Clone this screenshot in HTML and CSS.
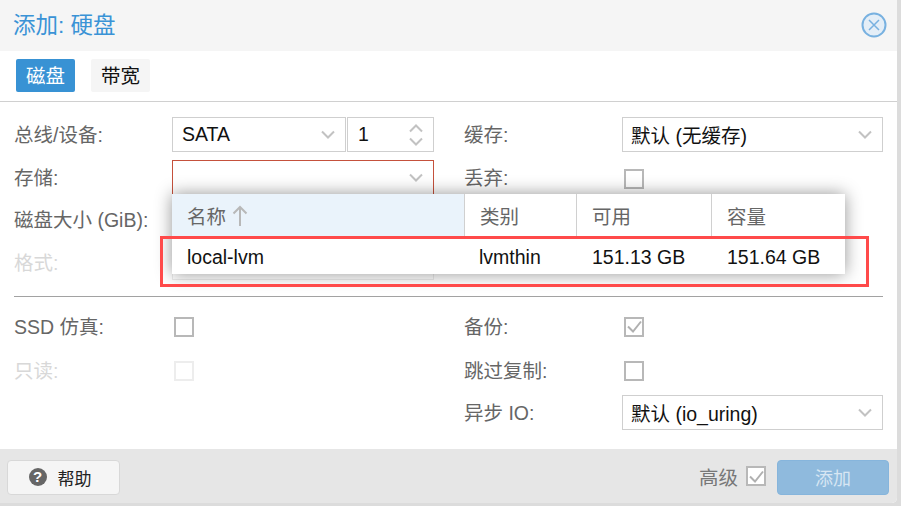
FILE: index.html
```html
<!DOCTYPE html>
<html lang="zh">
<head>
<meta charset="utf-8">
<title>添加: 硬盘</title>
<link rel="stylesheet" href="styles.css">
</head>
<body>
<div class="win">
  <header class="head">
    <span class="title">添加: 硬盘</span>
    <svg class="close" width="26" height="26" viewBox="0 0 26 26"><circle cx="13" cy="13" r="11.500" fill="#e4eef7" stroke="#78b1e0" stroke-width="2"/><path d="M8 8l10 10M18 8L8 18" stroke="#78b1e0" stroke-width="1.500" fill="none"/></svg>
  </header>
  <nav class="tabs">
    <span class="tab active">磁盘</span>
    <span class="tab">带宽</span>
  </nav>
  <main class="form">
    <div class="cols">
      <div class="col">
        <div class="row">
          <label class="lbl">总线/设备:</label>
          <div class="group">
            <div class="field bus">SATA<svg class="chev" width="14" height="9" viewBox="0 0 14 9"><path d="M1 1.500l6 6 6-6" /></svg></div>
            <div class="field spin">1<span class="arrows"><svg class="chev" width="14" height="9" viewBox="0 0 14 9"><path d="M1 7.500l6-6 6 6" /></svg><svg class="chev" width="14" height="9" viewBox="0 0 14 9"><path d="M1 1.500l6 6 6-6" /></svg></span></div>
          </div>
        </div>
        <div class="row">
          <label class="lbl">存储:</label>
          <div class="field invalid"><svg class="chev" width="14" height="9" viewBox="0 0 14 9"><path d="M1 1.500l6 6 6-6" /></svg></div>
        </div>
        <div class="row">
          <label class="lbl">磁盘大小 (GiB):</label>
          <div class="field"></div>
        </div>
        <div class="row off">
          <label class="lbl">格式:</label>
          <div class="field"></div>
        </div>
      </div>
      <div class="col">
        <div class="row">
          <label class="lbl">缓存:</label>
          <div class="field">默认 (无缓存)<svg class="chev" width="14" height="9" viewBox="0 0 14 9"><path d="M1 1.500l6 6 6-6" /></svg></div>
        </div>
        <div class="row">
          <label class="lbl">丢弃:</label>
          <span class="check low"></span>
        </div>
      </div>
    </div>
    <hr class="rule">
    <div class="cols lower">
      <div class="col">
        <div class="row">
          <label class="lbl">SSD 仿真:</label>
          <span class="check"></span>
        </div>
        <div class="row off">
          <label class="lbl">只读:</label>
          <span class="check"></span>
        </div>
      </div>
      <div class="col">
        <div class="row">
          <label class="lbl">备份:</label>
          <span class="check"><svg width="16" height="15" viewBox="0 0 16 15"><path d="M2 7.500l5 5 8-10" fill="none" stroke="#b0b0b0" stroke-width="2"/></svg></span>
        </div>
        <div class="row">
          <label class="lbl">跳过复制:</label>
          <span class="check"></span>
        </div>
        <div class="row">
          <label class="lbl">异步 IO:</label>
          <div class="field">默认 (io_uring)<svg class="chev" width="14" height="9" viewBox="0 0 14 9"><path d="M1 1.500l6 6 6-6" /></svg></div>
        </div>
      </div>
    </div>
  </main>
  <footer class="foot">
    <button class="btn help"><span class="qmark">?</span>帮助</button>
    <span class="adv">高级</span>
    <span class="check"><svg width="16" height="15" viewBox="0 0 16 15"><path d="M2 7.500l5 5 8-10" fill="none" stroke="#b0b0b0" stroke-width="2"/></svg></span>
    <button class="btn add">添加</button>
  </footer>

  <div class="picker">
    <div class="ph first">名称<svg class="sort" width="16" height="22" viewBox="0 0 16 22"><path d="M8 21V2M1.500 8.500L8 2l6.500 6.500" fill="none" stroke="#b8b8b8" stroke-width="2"/></svg></div>
    <div class="ph">类别</div>
    <div class="ph">可用</div>
    <div class="ph last">容量</div>
    <div class="pc">local-lvm</div>
    <div class="pc">lvmthin</div>
    <div class="pc num">151.13 GB</div>
    <div class="pc num">151.64 GB</div>
  </div>
  <div class="mark"></div>
</div>
</body>
</html>
```
FILE: styles.css
```css
* { box-sizing: border-box; }
html, body { margin: 0; height: 100%; overflow: hidden; }
body {
  background: #dcdcdc;
  font: 19.5px "Liberation Sans", "Noto Sans CJK SC", sans-serif;
  color: #111;
}
.win {
  position: relative;
  width: 897px;
  height: 503px;
  background: #fff;
  border-radius: 0 0 5px 0;
  overflow: hidden;
  display: flex;
  flex-direction: column;
}
.head {
  height: 51px;
  flex: none;
  background: #f5f5f5;
  display: flex;
  align-items: center;
  justify-content: space-between;
  padding: 0 10px 0 13px;
}
.title { font-size: 22.5px; color: #3a93d6; margin-bottom: 5px; }
.close { margin-bottom: 2px; }
.tabs {
  height: 51px;
  flex: none;
  padding: 8px 16px 0;
  display: flex;
  gap: 16px;
  border-bottom: 1px solid #d0d0d0;
}
.tab {
  width: 59px;
  height: 33px;
  padding-bottom: 2px;
  border-radius: 2px;
  background: #f5f5f5;
  display: flex;
  align-items: center;
  justify-content: center;
  color: #111;
}
.tab.active { background: #3892d4; color: #fff; }
.form { flex: 1; padding-top: 15px; }
.cols {
  display: grid;
  grid-template-columns: 420px 419px;
  column-gap: 30px;
  padding-left: 14px;
}
.col { display: flex; flex-direction: column; gap: 7.5px; }
.lower .col { gap: 8px; }
.lower .row:nth-child(2) { margin-top: 1px; }
.lower .row:nth-child(3) { margin-top: -1px; }
.row { height: 35px; display: flex; align-items: center; }
.lbl { width: 158px; flex: none; color: #666; padding-bottom: 2px; }
.off .lbl { color: #d8d8d8; }
.group { flex: 1; display: flex; gap: 1px; }
.field {
  flex: 1;
  height: 35px;
  border: 1px solid #cfcfcf;
  background: #fff;
  display: flex;
  align-items: center;
  justify-content: space-between;
  padding: 0 10px 0 8px;
}
.off .field { border-color: #ececec; }
.bus { flex: none; width: 174px; padding-left: 9px; }
.spin { flex: none; width: 87px; padding-left: 10px; }
.invalid { border-color: #c5513c; justify-content: flex-end; }
.chev { flex: none; fill: none; stroke: #c2c2c2; stroke-width: 2; }
.arrows { display: flex; flex-direction: column; gap: 4px; }
.check {
  width: 20px;
  height: 20px;
  margin-left: 2px;
  border: 2px solid #b8b8b8;
  background: #fff;
  display: flex;
  align-items: center;
  justify-content: center;
}
.check.low { margin-top: 4px; }
.off .check { border-color: #ededed; }
.rule {
  height: 1px;
  margin: 16.5px 14px 12px;
  border: 0;
  background: #a2a2a2;
}
.foot {
  height: 54px;
  flex: none;
  background: #e6e6e6;
  display: flex;
  align-items: center;
  padding: 0 8px 0 7px;
}
.btn {
  height: 35px;
  margin-top: 3px;
  padding-bottom: 2px;
  border-radius: 4px;
  font: 18px "Liberation Sans", "Noto Sans CJK SC", sans-serif;
  display: flex;
  align-items: center;
  justify-content: center;
}
.help {
  width: 113px;
  padding-right: 13px;
  background: #f5f5f5;
  border: 1px solid #d8d8d8;
  color: #222;
  gap: 11px;
  margin-right: auto;
  font-size: 17px;
}
.qmark {
  width: 18px;
  height: 18px;
  border-radius: 50%;
  background: #666;
  color: #fff;
  font: bold 15px/18px "Liberation Sans", sans-serif;
  text-align: center;
}
.adv { color: #777; margin-right: 8px; }
.foot .check { margin: 0 11px 0 0; }
.add { width: 112px; background: #8fbadd; border: 1px solid #86b5dc; color: #d7e6f3; }
.picker {
  position: absolute;
  left: 172px;
  top: 194px;
  width: 673px;
  height: 80px;
  background: #fff;
  box-shadow: 0 0 16px rgba(0, 0, 0, .42);
  display: grid;
  grid-template-columns: 292px 112px 135px 134px;
  grid-template-rows: 43px 37px;
}
.ph {
  padding-left: 15px;
  border-left: 1px solid #d0d0d0;
  color: #666;
  display: flex;
  align-items: center;
  gap: 6px;
}
.ph.first { border-left: 0; background: #eaf3fb; }
.pc { padding: 3px 0 0 15px; display: flex; align-items: center; color: #111; }
.pc.num { padding-left: 16px; }
.mark {
  position: absolute;
  left: 160px;
  top: 236px;
  width: 709px;
  height: 51px;
  border: 3px solid #ff4a4a;
}
```
